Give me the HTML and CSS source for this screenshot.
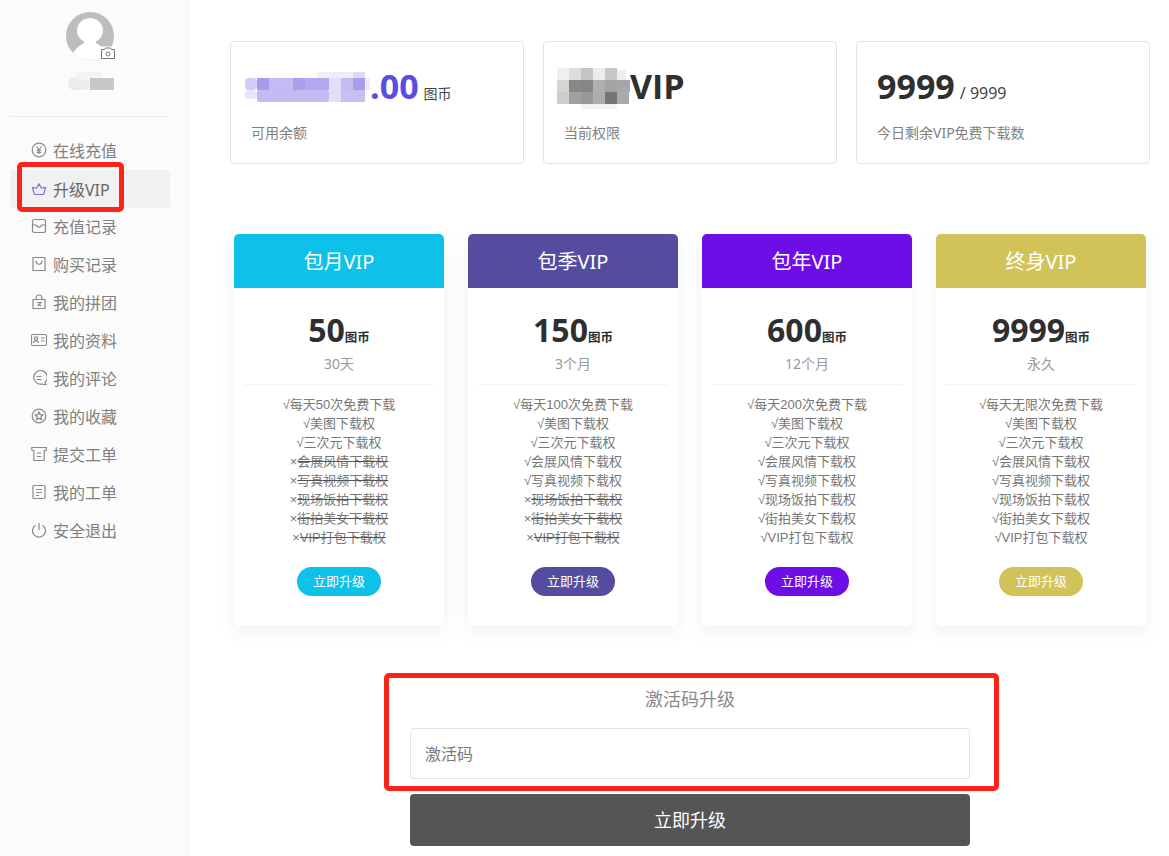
FILE: index.html
```html
<!DOCTYPE html>
<html lang="zh-CN">
<head>
<meta charset="utf-8">
<title>升级VIP</title>
<link rel="stylesheet" href="styles.css">
</head>
<body>
<div class="page">
  <aside class="sidebar">
    <div class="avatar-wrap">
      <svg class="avatar" width="48" height="48" viewBox="0 0 48 48">
        <defs><clipPath id="ac"><circle cx="24" cy="24" r="24"/></clipPath></defs>
        <g clip-path="url(#ac)">
          <rect width="48" height="48" fill="#bdbdbd"/>
          <ellipse cx="24" cy="18.500" rx="13" ry="12.500" fill="#fff"/>
          <path d="M18 28v3c-4 3-11 5-13 17h38c-2-12-9-14-13-17v-3z" fill="#fff"/>
        </g>
      </svg>
      <svg class="camera" width="16" height="14" viewBox="0 0 16 14">
        <rect x="0.500" y="0.500" width="15" height="13" rx="2" fill="#fff"/>
        <path d="M1.500 3.500h3l1-1.500h5l1 1.500h3v9h-13z" fill="none" stroke="#777" stroke-width="1"/>
        <circle cx="8" cy="8" r="2" fill="none" stroke="#777" stroke-width="1"/>
      </svg>
    </div>
    <svg class="name-blur" width="46" height="20" viewBox="0 0 46 20">
      <rect x="0" y="6" width="22" height="13" rx="6" fill="#ececec"/>
      <rect x="8" y="1" width="26" height="8" rx="4" fill="#f3f3f3"/>
      <rect x="22" y="7" width="24" height="12" fill="#c8c8c8"/>
    </svg>
    <div class="side-divider"></div>
    <nav class="menu">
      <a class="menu-item"><svg class="mi" viewBox="0 0 16 16"><circle cx="8" cy="8" r="6.800"/><path d="M5.500 4.500 8 8l2.500-3.500M8 8v4M5.800 8.500h4.400M5.800 10.300h4.400"/></svg>在线充值</a>
      <a class="menu-item active"><svg class="mi" viewBox="0 0 16 16"><path d="M1.500 6.500 5.500 7 8 3l2.500 4 4-.5-1.800 7H3.300z"/></svg>升级VIP</a>
      <a class="menu-item"><svg class="mi" viewBox="0 0 16 16"><rect x="1.500" y="1.500" width="13" height="13" rx="2"/><path d="M1.500 7h3.800c.5 1.500 1.500 2.200 2.700 2.200s2.200-.7 2.700-2.200h3.800"/></svg>充值记录</a>
      <a class="menu-item"><svg class="mi" viewBox="0 0 16 16"><path d="M2 1.500h12v13H2z"/><path d="M5 4.500c0 5 6 5 6 0"/></svg>购买记录</a>
      <a class="menu-item"><svg class="mi" viewBox="0 0 16 16"><path d="M2 5.500h12v9H2z"/><path d="M5 5.500V4a3 3 0 0 1 6 0v1.500M6 8.500h4L6.500 12M8 10l2 2"/></svg>我的拼团</a>
      <a class="menu-item"><svg class="mi" viewBox="0 0 16 16"><rect x="0.500" y="2.500" width="15" height="11" rx="1.500"/><circle cx="5" cy="6.500" r="1.700"/><path d="M2.500 11c.3-3 4.700-3 5 0M10 6h3.500M10 9h3.500"/></svg>我的资料</a>
      <a class="menu-item"><svg class="mi" viewBox="0 0 16 16"><path d="M14 12.500A6.800 6.800 0 1 0 11 14c1.500.6 3 .7 4 .5-.6-.5-1-1.200-1-2zM5.500 6.500h5M5.500 9.500h5"/></svg>我的评论</a>
      <a class="menu-item"><svg class="mi" viewBox="0 0 16 16"><circle cx="8" cy="8" r="6.800"/><path d="m8 4 1.200 2.600 2.800.3-2.100 1.900.6 2.800L8 10.200l-2.500 1.400.6-2.800L4 6.900l2.800-.3z"/></svg>我的收藏</a>
      <a class="menu-item"><svg class="mi" viewBox="0 0 16 16"><path d="M.8 4.500V1.500h14.400v3h-2v10h-10.400v-10h-2M5.800 7h4.400M5.800 10.500h4.400"/></svg>提交工单</a>
      <a class="menu-item"><svg class="mi" viewBox="0 0 16 16"><rect x="2" y="1.500" width="12" height="13" rx="1"/><path d="M5 5.500h6M5 8.500h6M5 11.500h3"/></svg>我的工单</a>
      <a class="menu-item"><svg class="mi" viewBox="0 0 16 16"><path d="M8 1v7M4.500 3.200a6.500 6.500 0 1 0 7 0"/></svg>安全退出</a>
    </nav>
    <div class="callout callout-menu"></div>
  </aside>

  <main class="main">
    <section class="stats">
      <div class="stat">
        <div class="stat-value">
          <svg class="blur blur-balance" width="125" height="32" viewBox="0 0 125 32">
            <rect x="72" y="1" width="12" height="6" fill="#f1effc"/>
            <rect x="84" y="1" width="24" height="6" fill="#eeecfc"/>
            <rect x="108" y="1" width="12" height="6" fill="#dcd8f8"/>
            <rect x="0" y="7" width="12" height="12" rx="4" fill="#d3cbf5"/>
            <rect x="12" y="7" width="12" height="12" fill="#a79bed"/>
            <rect x="24" y="7" width="24" height="12" fill="#c4bbf3"/>
            <rect x="48" y="7" width="12" height="12" fill="#aa9fef"/>
            <rect x="60" y="7" width="24" height="12" fill="#b4a9f0"/>
            <rect x="84" y="7" width="12" height="12" fill="#e2defa"/>
            <rect x="96" y="7" width="12" height="12" fill="#c4bbf3"/>
            <rect x="108" y="7" width="12" height="12" fill="#a99dee"/>
            <rect x="120" y="7" width="5" height="12" fill="#eeecfc"/>
            <rect x="0" y="19" width="12" height="9" rx="4" fill="#e8e5fb"/>
            <rect x="12" y="19" width="72" height="12" rx="2" fill="#c3baf3"/>
            <rect x="84" y="19" width="12" height="12" fill="#e2defa"/>
            <rect x="96" y="19" width="24" height="12" fill="#c7bff4"/>
          </svg>
          <span class="num purple">.00</span><span class="unit">图币</span>
        </div>
        <div class="stat-label">可用余额</div>
      </div>
      <div class="stat">
        <div class="stat-value">
          <svg class="blur blur-vip" width="73" height="44" viewBox="0 0 73 44">
            <rect x="0" y="2" width="12" height="12" fill="#f1f0ee"/>
            <rect x="12" y="2" width="12" height="12" fill="#dcdcdc"/>
            <rect x="24" y="2" width="12" height="12" fill="#c4c4c4"/>
            <rect x="36" y="2" width="12" height="12" fill="#ececec"/>
            <rect x="48" y="2" width="12" height="12" fill="#c6c6c6"/>
            <rect x="60" y="4" width="9" height="10" fill="#eeeeee"/>
            <rect x="0" y="14" width="12" height="12" fill="#d6d5d1"/>
            <rect x="12" y="14" width="12" height="12" fill="#888"/>
            <rect x="24" y="14" width="12" height="12" fill="#868686"/>
            <rect x="36" y="14" width="12" height="12" fill="#b0b0b0"/>
            <rect x="48" y="14" width="12" height="12" fill="#a3a3a3"/>
            <rect x="60" y="14" width="13" height="12" fill="#a4a8ac"/>
            <rect x="0" y="26" width="12" height="12" fill="#cfcec9"/>
            <rect x="12" y="26" width="12" height="12" fill="#a0a0a0"/>
            <rect x="24" y="26" width="12" height="12" fill="#989898"/>
            <rect x="36" y="26" width="12" height="12" fill="#adadad"/>
            <rect x="48" y="26" width="12" height="12" fill="#757575"/>
            <rect x="60" y="26" width="12" height="12" fill="#a9acae"/>
            <rect x="24" y="38" width="36" height="5" rx="2" fill="#f3f1f1"/>
          </svg>
          <span class="num">VIP</span>
        </div>
        <div class="stat-label">当前权限</div>
      </div>
      <div class="stat">
        <div class="stat-value"><span class="num">9999</span><span class="unit unit-lg">/ 9999</span></div>
        <div class="stat-label">今日剩余VIP免费下载数</div>
      </div>
    </section>

    <section class="plans">
      <article class="plan">
        <header class="plan-head c-month">包月VIP</header>
        <div class="plan-body">
          <div class="price"><b>50</b><span>图币</span></div>
          <div class="period">30天</div>
          <ul class="perks">
            <li>√每天50次免费下载</li><li>√美图下载权</li><li>√三次元下载权</li>
            <li>×<s>会展风情下载权</s></li><li>×<s>写真视频下载权</s></li><li>×<s>现场饭拍下载权</s></li><li>×<s>街拍美女下载权</s></li><li>×<s>VIP打包下载权</s></li>
          </ul>
          <a class="buy c-month">立即升级</a>
        </div>
      </article>
      <article class="plan">
        <header class="plan-head c-season">包季VIP</header>
        <div class="plan-body">
          <div class="price"><b>150</b><span>图币</span></div>
          <div class="period">3个月</div>
          <ul class="perks">
            <li>√每天100次免费下载</li><li>√美图下载权</li><li>√三次元下载权</li>
            <li>√会展风情下载权</li><li>√写真视频下载权</li><li>×<s>现场饭拍下载权</s></li><li>×<s>街拍美女下载权</s></li><li>×<s>VIP打包下载权</s></li>
          </ul>
          <a class="buy c-season">立即升级</a>
        </div>
      </article>
      <article class="plan">
        <header class="plan-head c-year">包年VIP</header>
        <div class="plan-body">
          <div class="price"><b>600</b><span>图币</span></div>
          <div class="period">12个月</div>
          <ul class="perks">
            <li>√每天200次免费下载</li><li>√美图下载权</li><li>√三次元下载权</li>
            <li>√会展风情下载权</li><li>√写真视频下载权</li><li>√现场饭拍下载权</li><li>√街拍美女下载权</li><li>√VIP打包下载权</li>
          </ul>
          <a class="buy c-year">立即升级</a>
        </div>
      </article>
      <article class="plan">
        <header class="plan-head c-life">终身VIP</header>
        <div class="plan-body">
          <div class="price"><b>9999</b><span>图币</span></div>
          <div class="period">永久</div>
          <ul class="perks">
            <li>√每天无限次免费下载</li><li>√美图下载权</li><li>√三次元下载权</li>
            <li>√会展风情下载权</li><li>√写真视频下载权</li><li>√现场饭拍下载权</li><li>√街拍美女下载权</li><li>√VIP打包下载权</li>
          </ul>
          <a class="buy c-life">立即升级</a>
        </div>
      </article>
    </section>

    <section class="code-form">
      <h3 class="code-title">激活码升级</h3>
      <input class="code-input" type="text" placeholder="激活码">
      <a class="code-submit">立即升级</a>
      <div class="callout callout-form"></div>
    </section>
  </main>
</div>
</body>
</html>
```
FILE: styles.css
```css
* { box-sizing: border-box; }
html, body { margin: 0; height: 100%; overflow: hidden; background: #fff; }
body { font-family: "Noto Sans", "Noto Sans CJK SC", sans-serif; color: #777; }
a { text-decoration: none; }

.page { display: flex; width: 1169px; height: 856px; }

/* sidebar */
.sidebar { position: relative; flex: 0 0 190px; background: #fbfbfb; padding: 12px 20px 0 10px; }
.avatar-wrap { position: relative; width: 48px; height: 48px; margin: 0 auto; }
.avatar { display: block; }
.camera { position: absolute; right: -2px; bottom: 0; }
.name-blur { display: block; margin: 11px 0 0 58px; }
.side-divider { height: 1px; background: #ebebeb; margin-top: 25px; }
.menu { display: flex; flex-direction: column; margin-top: 14px; }
.menu-item { display: flex; align-items: center; height: 38px; padding-left: 21px; gap: 6px; font-size: 16px; color: #808080; border-radius: 3px; }
.menu-item.active { background: #f1f1f1; color: #666; margin-top: 1px; margin-bottom: -1px; }
.mi { width: 16px; height: 16px; fill: none; stroke: #8a8a8a; stroke-width: 1.2; flex: none; }
.active .mi { stroke: #7a70e6; }
.callout { position: absolute; border: 5px solid #fb2419; border-radius: 5px; pointer-events: none; }
.callout-menu { left: 17px; top: 162px; width: 107px; height: 50px; }

/* main */
.main { flex: 1; padding: 41px 19px 0 40px; }
.stats { display: grid; grid-template-columns: repeat(3, 294px); column-gap: 19px; }
.stat { height: 123px; border: 1px solid #e3e3e3; border-radius: 4px; padding: 23px 20px 0; }
.stat-value { display: flex; align-items: baseline; height: 42px; color: #2f2f2f; }
.num { font-family: "Open Sans", "Noto Sans", sans-serif; font-size: 34px; line-height: 42px; font-weight: 700; }
.purple { color: #5b4de0; }
.unit { font-size: 14px; color: #444; margin-left: 5px; }
.unit-lg { font-size: 16px; margin-left: 5px; }
.blur { flex: none; align-self: flex-start; }
.blur-balance { margin: 6px 0 0 -6px; }
.blur-vip { margin: 1px 0 0 -7px; }
.stat-label { margin-top: 16px; font-size: 14px; line-height: 20px; color: #808080; }

.plans { display: grid; grid-template-columns: repeat(4, 210px); column-gap: 24px; margin: 70px 0 0 4px; }
.plan { height: 392px; background: #fff; border-radius: 5px; box-shadow: 0 6px 16px rgba(120, 130, 170, .12); overflow: hidden; }
.plan-head { height: 54px; display: flex; align-items: center; justify-content: center; font-size: 20px; color: #fff; padding-bottom: 1px; }
.c-month { background: #0ec1e8; }
.c-season { background: #544c9f; }
.c-year { background: #6e0de6; }
.c-life { background: #d1c35a; }
.plan-body { display: flex; flex-direction: column; align-items: center; padding: 0 10px; }
.price { display: flex; align-items: baseline; margin-top: 21px; height: 42px; color: #2f2f2f; }
.price b { font-family: "Open Sans", "Noto Sans", sans-serif; font-size: 32px; line-height: 42px; font-weight: 700; }
.price span { font-size: 12.500px; font-weight: 700; }
.period { font-size: 14px; line-height: 20px; color: #999; margin-top: 3px; }
.perks { list-style: none; margin: 10px 0 0; padding: 10px 0 0; width: 100%; border-top: 1px solid #f3f3f3; font-family: "Liberation Sans", "Noto Sans CJK SC", sans-serif; font-size: 13px; line-height: 19px; text-align: center; color: #777; }
.perks s { text-decoration-color: #555; }
.buy { display: block; width: 84px; height: 29px; margin-top: 20px; border-radius: 15px; color: #fff; font-size: 13px; line-height: 29px; text-align: center; }

/* activation */
.code-form { position: relative; width: 560px; margin: 0 0 0 180px; padding-top: 59px; }
.code-title { margin: 0; height: 28px; font-size: 18px; line-height: 28px; font-weight: 400; color: #8a8a8a; text-align: center; }
.code-input { display: block; width: 100%; height: 51px; margin-top: 15px; padding: 0 14px; border: 1px solid #e3e3e3; border-radius: 4px; font: 16px "Noto Sans", "Noto Sans CJK SC", sans-serif; color: #777; background: #fff; outline: none; }
.code-input::placeholder { color: #777; opacity: 1; }
.code-submit { display: block; height: 52px; margin-top: 15px; background: #555; border-radius: 4px; color: #fff; font-size: 18px; line-height: 52px; text-align: center; }
.callout-form { left: -26px; top: 47px; width: 615px; height: 118px; }
```
